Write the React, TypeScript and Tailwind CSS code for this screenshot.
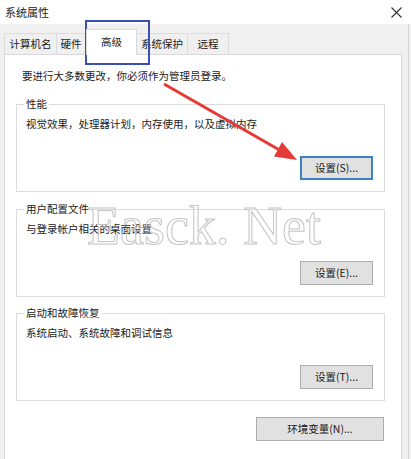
import React from 'react';

const tabs = [
  { label: '计算机名', w: 'w-[53px]' },
  { label: '硬件', w: 'w-[30px]' },
  { label: '高级', w: 'w-[51px]', active: true },
  { label: '系统保护', w: 'w-[52px]' },
  { label: '远程', w: 'w-[42px]' },
];

const groups = [
  { title: '性能', desc: '视觉效果，处理器计划，内存使用，以及虚拟内存', btn: '设置(S)...', primary: true, mt: 'mt-[21px]' },
  { title: '用户配置文件', desc: '与登录帐户相关的桌面设置', btn: '设置(E)...', mt: 'mt-[17px]' },
  { title: '启动和故障恢复', desc: '系统启动、系统故障和调试信息', btn: '设置(T)...', mt: 'mt-[16px]' },
];

function Button({ label, primary, className = '' }: { label: string; primary?: boolean; className?: string }) {
  return (
    <button
      className={`h-[24px] bg-[#e1e1e1] text-[10.5px] leading-none text-[#1a1a1a] ${
        primary ? 'border-2 border-[#3d82c4]' : 'border border-[#adadad]'
      } ${className}`}
    >
      {label}
    </button>
  );
}

export default function App() {
  return (
    <div className="relative w-[411px] h-[459px] overflow-hidden bg-[#f0f0f0] font-['Microsoft_YaHei','Noto_Sans_CJK_SC',sans-serif] text-[10.5px] text-[#1a1a1a]">
      <div className="h-[24px] bg-white flex items-center justify-between pl-[5px] pr-[9px]">
        <span className="text-[11px] text-[#222]">系统属性</span>
        <svg width="11" height="11" viewBox="0 0 11 11">
          <path d="M0.5 0.5 L10.5 10.5 M10.5 0.5 L0.5 10.5" stroke="#333" strokeWidth="1.1" />
        </svg>
      </div>

      <div className="flex items-end h-[30px] pl-[4px]">
        {tabs.map((t) =>
          t.active ? (
            <div
              key={t.label}
              className={`${t.w} h-[26px] -mb-px relative z-10 bg-white border border-b-0 border-[#d9d9d9] flex items-start justify-center pt-[5px] leading-[14px]`}
            >
              {t.label}
            </div>
          ) : (
            <div
              key={t.label}
              className={`${t.w} h-[21px] border border-b-0 border-[#dcdcdc] -ml-px first:ml-0 flex items-center justify-center leading-[14px] text-[#222]`}
            >
              {t.label}
            </div>
          )
        )}
      </div>

      <div className="ml-[4px] w-[398px] h-[420px] bg-white border border-[#d9d9d9] pt-[14px] pl-[11px]">
        <p className="pl-[6px] leading-[14px]">要进行大多数更改，你必须作为管理员登录。</p>

        {groups.map((g) => (
          <div key={g.title} className={`${g.mt} relative w-[369px] h-[88px] border border-[#dcdcdc]`}>
            <span className="absolute left-[7px] -top-[8px] px-[2px] bg-white leading-[14px]">{g.title}</span>
            <p className="pt-[12px] pl-[9px] leading-[14px]">{g.desc}</p>
            <div className="flex justify-end pr-[11px] mt-[25px]">
              <Button label={g.btn} primary={g.primary} className="w-[73px]" />
            </div>
          </div>
        ))}

        <div className="w-[369px] flex justify-end mt-[16px]">
          <Button label="环境变量(N)..." className="w-[128px] mr-[1px]" />
        </div>
      </div>

      <div className="absolute right-[2px] top-[24px] bottom-0 w-px bg-[#d4d4d4]" />

      <div className="absolute left-[87px] top-[199px] font-['Liberation_Serif',serif] text-[54px] leading-none text-transparent [-webkit-text-stroke:1px_#c4c4c4] pointer-events-none">
        Easck. Net
      </div>

      <svg className="absolute inset-0 pointer-events-none" width="411" height="459" viewBox="0 0 411 459">
        <rect x="86" y="21" width="63" height="43" fill="none" stroke="#3a4fb2" strokeWidth="2" />
        <line x1="164" y1="84" x2="283" y2="152" stroke="#e53a35" strokeWidth="3" />
        <polygon points="297,160 274,156.5 282,142" fill="#e53a35" />
      </svg>
    </div>
  );
}
